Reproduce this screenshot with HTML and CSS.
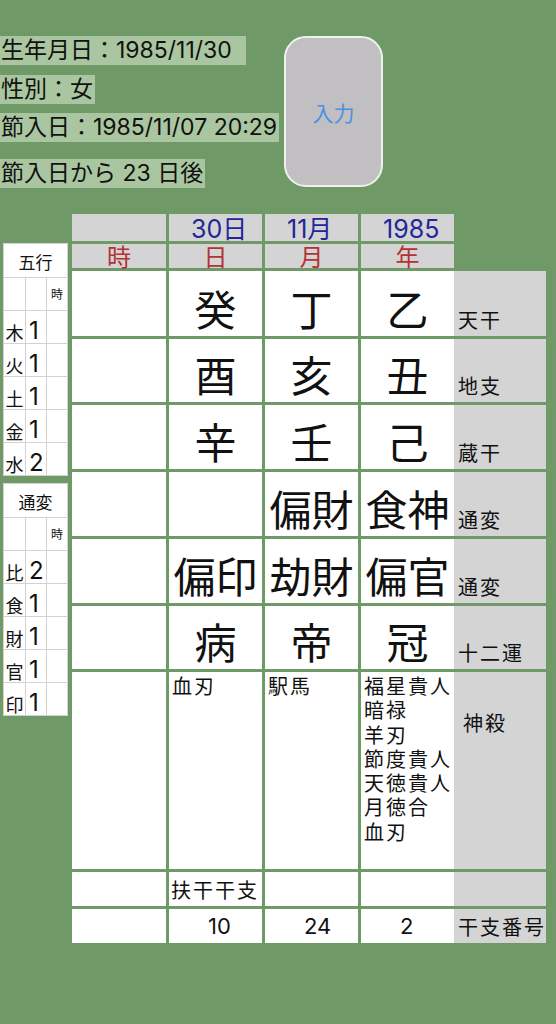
FILE: index.html
```html
<!DOCTYPE html>
<html lang="ja">
<head>
<meta charset="utf-8">
<title>命式</title>
<link rel="stylesheet" href="styles.css">
</head>
<body>
<div class="page">
  <div class="top">
    <div class="info">
      <span class="tag t1">生年月日：1985/11/30</span>
      <span class="tag t2">性別：女</span>
      <span class="tag t3">節入日：1985/11/07 20:29</span>
      <span class="tag t4">節入日から 23 日後</span>
    </div>
    <button class="input-btn" type="button">入力</button>
  </div>

  <div class="bottom">
    <div class="side">
      <div class="mini">
        <div class="mini-head">五行</div>
        <div class="mc"></div><div class="mc"></div><div class="mc ji">時</div>
        <div class="mc k">木</div><div class="mc n">1</div><div class="mc"></div>
        <div class="mc k">火</div><div class="mc n">1</div><div class="mc"></div>
        <div class="mc k">土</div><div class="mc n">1</div><div class="mc"></div>
        <div class="mc k">金</div><div class="mc n">1</div><div class="mc"></div>
        <div class="mc k">水</div><div class="mc n">2</div><div class="mc"></div>
      </div>
      <div class="mini">
        <div class="mini-head">通変</div>
        <div class="mc"></div><div class="mc"></div><div class="mc ji">時</div>
        <div class="mc k">比</div><div class="mc n">2</div><div class="mc"></div>
        <div class="mc k">食</div><div class="mc n">1</div><div class="mc"></div>
        <div class="mc k">財</div><div class="mc n">1</div><div class="mc"></div>
        <div class="mc k">官</div><div class="mc n">1</div><div class="mc"></div>
        <div class="mc k">印</div><div class="mc n">1</div><div class="mc"></div>
      </div>
    </div>

    <div class="chart">
      <div class="hd"></div>
      <div class="hd date">30日</div>
      <div class="hd date">11月</div>
      <div class="hd date">1985</div>
      <div class="void"></div>

      <div class="hd pillar">時</div>
      <div class="hd pillar">日</div>
      <div class="hd pillar">月</div>
      <div class="hd pillar">年</div>
      <div class="void"></div>

      <div class="cell"></div>
      <div class="cell big">癸</div>
      <div class="cell big">丁</div>
      <div class="cell big">乙</div>
      <div class="lab low">天干</div>

      <div class="cell"></div>
      <div class="cell big">酉</div>
      <div class="cell big">亥</div>
      <div class="cell big">丑</div>
      <div class="lab low">地支</div>

      <div class="cell"></div>
      <div class="cell big">辛</div>
      <div class="cell big">壬</div>
      <div class="cell big">己</div>
      <div class="lab low">蔵干</div>

      <div class="cell"></div>
      <div class="cell big"></div>
      <div class="cell big">偏財</div>
      <div class="cell big">食神</div>
      <div class="lab low">通変</div>

      <div class="cell"></div>
      <div class="cell big">偏印</div>
      <div class="cell big">劫財</div>
      <div class="cell big">偏官</div>
      <div class="lab low">通変</div>

      <div class="cell"></div>
      <div class="cell big">病</div>
      <div class="cell big">帝</div>
      <div class="cell big">冠</div>
      <div class="lab low">十二運</div>

      <div class="cell"></div>
      <div class="cell list"><span class="ln">血刃</span></div>
      <div class="cell list"><span class="ln">駅馬</span></div>
      <div class="cell list">
        <span class="ln">福星貴人</span>
        <span class="ln">暗禄</span>
        <span class="ln">羊刃</span>
        <span class="ln">節度貴人</span>
        <span class="ln">天徳貴人</span>
        <span class="ln">月徳合</span>
        <span class="ln">血刃</span>
      </div>
      <div class="lab shen">神殺</div>

      <div class="cell"></div>
      <div class="cell mid">扶干干支</div>
      <div class="cell"></div>
      <div class="cell"></div>
      <div class="lab"></div>

      <div class="cell"></div>
      <div class="cell num">10</div>
      <div class="cell num">24</div>
      <div class="cell num">2</div>
      <div class="lab mid">干支番号</div>
    </div>
  </div>
</div>
</body>
</html>
```

FILE: styles.css
```css
* { box-sizing: border-box; }

html, body {
  margin: 0;
  padding: 0;
}

body {
  background: #6f9a67;
  font-family: Inter, "Noto Sans CJK JP", sans-serif;
  color: #111;
  width: 556px;
  height: 1024px;
  overflow: hidden;
}

.page {
  display: flex;
  flex-direction: column;
}

/* ---------- top ---------- */
.top {
  display: flex;
  align-items: flex-start;
  padding-top: 36px;
}

.info {
  width: 284px;
  display: flex;
  flex-direction: column;
  align-items: flex-start;
}

.tag {
  background: #a9c6a0;
  font-size: 23px;
  height: 29px;
  line-height: 29px;
  padding: 0 2px 0 1px;
  white-space: nowrap;
}

.t1 { padding-right: 14px; }
.t2 { margin-top: 10px; }
.t3 { margin-top: 9px; }
.t4 { margin-top: 17px; }

.input-btn {
  width: 99px;
  height: 151px;
  border: 2px solid #eef2ec;
  border-radius: 22px;
  background: #c1bfc1;
  color: #4d8fe6;
  font-family: "Noto Sans CJK JP", sans-serif;
  font-size: 21px;
  padding: 0;
}

/* ---------- bottom ---------- */
.bottom {
  display: flex;
  align-items: flex-start;
  margin-top: 26px;
}

.side {
  width: 65px;
  margin: 29px 4px 0 3px;
  display: flex;
  flex-direction: column;
  gap: 7px;
}

.mini {
  display: grid;
  grid-template-columns: 21px 20px 20px;
  grid-template-rows: 33px repeat(6, 32px);
  gap: 1px;
  background: #d2d2d2;
  border: 1px solid #d2d2d2;
}

.mini-head {
  grid-column: 1 / 4;
  background: #fff;
  font-family: "Noto Sans CJK JP", sans-serif;
  font-size: 17px;
  display: flex;
  align-items: flex-end;
  justify-content: center;
  padding-bottom: 3px;
}

.mc {
  background: #fff;
  display: flex;
  align-items: flex-end;
}

.mc.ji {
  font-family: "Noto Sans CJK JP", sans-serif;
  font-size: 12px;
  align-items: center;
  justify-content: center;
  padding-bottom: 2px;
}

.mc.k {
  font-family: "Noto Sans CJK JP", sans-serif;
  font-size: 18px;
  line-height: 18px;
  justify-content: center;
  padding-bottom: 2px;
}

.mc.n {
  font-size: 24px;
  line-height: 24px;
  padding-left: 3px;
  padding-bottom: 0;
}

/* ---------- chart ---------- */
.chart {
  display: grid;
  grid-template-columns: 94px 93px 93px 93px 89px;
  grid-template-rows: 27px 24px 65px 63px 64px 64px 64px 63px 197px 34px 34px;
  column-gap: 3px;
  row-gap: 3px;
}

.void { background: transparent; }

.hd {
  background: #d4d4d4;
}

.hd.date {
  color: #22269a;
  font-size: 25px;
  line-height: 27px;
  padding: 2px 0 0 22px;
}

.hd.pillar {
  color: #b33333;
  font-family: "Noto Sans CJK JP", sans-serif;
  font-size: 24px;
  line-height: 24px;
  text-align: center;
}

.cell {
  background: #fff;
  display: flex;
}

.big {
  font-family: "Noto Sans CJK JP", sans-serif;
  font-size: 42px;
  line-height: 42px;
  align-items: flex-end;
  justify-content: center;
  padding-bottom: 7px;
}

.list {
  font-family: "Noto Sans CJK JP", sans-serif;
  font-size: 20px;
  letter-spacing: 2px;
  padding: 4px 0 0 3px;
  flex-direction: column;
  align-items: flex-start;
}

.ln {
  display: block;
  height: 24.3px;
  line-height: 20px;
  white-space: nowrap;
}

.mid {
  font-family: "Noto Sans CJK JP", sans-serif;
  font-size: 20px;
  letter-spacing: 2px;
  align-items: center;
  padding-left: 2px;
}

.num {
  font-size: 22px;
  align-items: center;
  padding-left: 39px;
}

.lab {
  background: #d4d4d4;
  margin-left: -3px;
  display: flex;
  font-family: "Noto Sans CJK JP", sans-serif;
  font-size: 20px;
  letter-spacing: 2px;
  padding-left: 4px;
}

.lab.low {
  align-items: flex-end;
  padding-bottom: 6px;
  line-height: 20px;
}

.lab.shen {
  align-items: flex-start;
  padding: 41px 0 0 9px;
  line-height: 20px;
}

.lab.mid {
  align-items: center;
}
```
